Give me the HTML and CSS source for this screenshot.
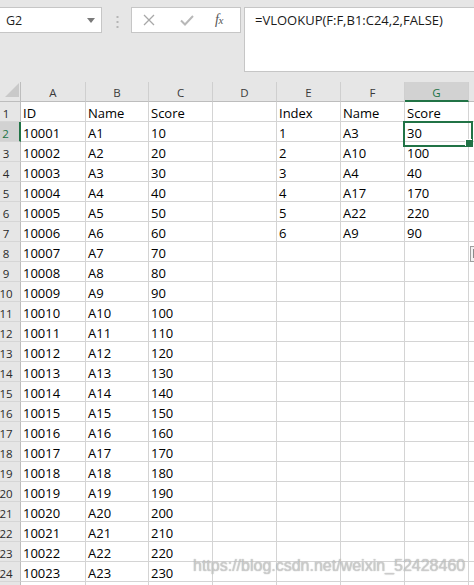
FILE: index.html
```html
<!DOCTYPE html>
<html>
<head>
<meta charset="utf-8">
<link rel="stylesheet" href="styles.css">
</head>
<body>
<div class="fbar">
  <div class="namebox"><span>G2</span><svg class="arrow" width="8" height="5" viewBox="0 0 8 5"><polygon points="0,0 8,0 4,5" fill="#7a7a7a"/></svg></div>
  <svg class="dots" width="3" height="12" viewBox="0 0 3 12"><rect x="0.5" y="0" width="2" height="2" fill="#b5b5b5"/><rect x="0.5" y="5" width="2" height="2" fill="#b5b5b5"/><rect x="0.5" y="10" width="2" height="2" fill="#b5b5b5"/></svg>
  <div class="btns">
    <svg class="btn-x" width="12" height="12" viewBox="0 0 12 12"><path d="M1 1 L11 11 M11 1 L1 11" stroke="#a8a8a8" stroke-width="1.3" fill="none"/></svg>
    <svg class="btn-ok" width="14" height="11" viewBox="0 0 14 11"><path d="M1 5.5 L5 9.5 L13 1" stroke="#b8b8b8" stroke-width="2" fill="none"/></svg>
    <span class="fx"><i>f</i><i class="x">x</i></span>
  </div>
  <div class="formula">=VLOOKUP(F:F,B1:C24,2,FALSE)</div>
</div>
<div class="sheet">
  <div class="grid">
    <div class="corner"><svg width="29" height="20" viewBox="0 0 29 20"><polygon points="13,15 27,15 27,1" fill="#c9c9c9"/></svg></div>
    <div class="ch">A</div><div class="ch">B</div><div class="ch">C</div><div class="ch">D</div><div class="ch">E</div><div class="ch">F</div><div class="ch act">G</div><div class="ch"></div>

    <div class="rh">1</div><div class="c">ID</div><div class="c">Name</div><div class="c">Score</div><div class="c"></div><div class="c">Index</div><div class="c">Name</div><div class="c">Score</div><div class="c"></div>
    <div class="rh act">2</div><div class="c">10001</div><div class="c">A1</div><div class="c">10</div><div class="c"></div><div class="c">1</div><div class="c">A3</div><div class="c sel">30</div><div class="c"></div>
    <div class="rh">3</div><div class="c">10002</div><div class="c">A2</div><div class="c">20</div><div class="c"></div><div class="c">2</div><div class="c">A10</div><div class="c">100</div><div class="c"></div>
    <div class="rh">4</div><div class="c">10003</div><div class="c">A3</div><div class="c">30</div><div class="c"></div><div class="c">3</div><div class="c">A4</div><div class="c">40</div><div class="c"></div>
    <div class="rh">5</div><div class="c">10004</div><div class="c">A4</div><div class="c">40</div><div class="c"></div><div class="c">4</div><div class="c">A17</div><div class="c">170</div><div class="c"></div>
    <div class="rh">6</div><div class="c">10005</div><div class="c">A5</div><div class="c">50</div><div class="c"></div><div class="c">5</div><div class="c">A22</div><div class="c">220</div><div class="c"></div>
    <div class="rh">7</div><div class="c">10006</div><div class="c">A6</div><div class="c">60</div><div class="c"></div><div class="c">6</div><div class="c">A9</div><div class="c">90</div><div class="c"></div>
    <div class="rh">8</div><div class="c">10007</div><div class="c">A7</div><div class="c">70</div><div class="c"></div><div class="c"></div><div class="c"></div><div class="c"></div><div class="c"></div>
    <div class="rh">9</div><div class="c">10008</div><div class="c">A8</div><div class="c">80</div><div class="c"></div><div class="c"></div><div class="c"></div><div class="c"></div><div class="c"></div>
    <div class="rh">10</div><div class="c">10009</div><div class="c">A9</div><div class="c">90</div><div class="c"></div><div class="c"></div><div class="c"></div><div class="c"></div><div class="c"></div>
    <div class="rh">11</div><div class="c">10010</div><div class="c">A10</div><div class="c">100</div><div class="c"></div><div class="c"></div><div class="c"></div><div class="c"></div><div class="c"></div>
    <div class="rh">12</div><div class="c">10011</div><div class="c">A11</div><div class="c">110</div><div class="c"></div><div class="c"></div><div class="c"></div><div class="c"></div><div class="c"></div>
    <div class="rh">13</div><div class="c">10012</div><div class="c">A12</div><div class="c">120</div><div class="c"></div><div class="c"></div><div class="c"></div><div class="c"></div><div class="c"></div>
    <div class="rh">14</div><div class="c">10013</div><div class="c">A13</div><div class="c">130</div><div class="c"></div><div class="c"></div><div class="c"></div><div class="c"></div><div class="c"></div>
    <div class="rh">15</div><div class="c">10014</div><div class="c">A14</div><div class="c">140</div><div class="c"></div><div class="c"></div><div class="c"></div><div class="c"></div><div class="c"></div>
    <div class="rh">16</div><div class="c">10015</div><div class="c">A15</div><div class="c">150</div><div class="c"></div><div class="c"></div><div class="c"></div><div class="c"></div><div class="c"></div>
    <div class="rh">17</div><div class="c">10016</div><div class="c">A16</div><div class="c">160</div><div class="c"></div><div class="c"></div><div class="c"></div><div class="c"></div><div class="c"></div>
    <div class="rh">18</div><div class="c">10017</div><div class="c">A17</div><div class="c">170</div><div class="c"></div><div class="c"></div><div class="c"></div><div class="c"></div><div class="c"></div>
    <div class="rh">19</div><div class="c">10018</div><div class="c">A18</div><div class="c">180</div><div class="c"></div><div class="c"></div><div class="c"></div><div class="c"></div><div class="c"></div>
    <div class="rh">20</div><div class="c">10019</div><div class="c">A19</div><div class="c">190</div><div class="c"></div><div class="c"></div><div class="c"></div><div class="c"></div><div class="c"></div>
    <div class="rh">21</div><div class="c">10020</div><div class="c">A20</div><div class="c">200</div><div class="c"></div><div class="c"></div><div class="c"></div><div class="c"></div><div class="c"></div>
    <div class="rh">22</div><div class="c">10021</div><div class="c">A21</div><div class="c">210</div><div class="c"></div><div class="c"></div><div class="c"></div><div class="c"></div><div class="c"></div>
    <div class="rh">23</div><div class="c">10022</div><div class="c">A22</div><div class="c">220</div><div class="c"></div><div class="c"></div><div class="c"></div><div class="c"></div><div class="c"></div>
    <div class="rh">24</div><div class="c">10023</div><div class="c">A23</div><div class="c">230</div><div class="c"></div><div class="c"></div><div class="c"></div><div class="c"></div><div class="c"></div>
    <div class="rh"></div><div class="c"></div><div class="c"></div><div class="c"></div><div class="c"></div><div class="c"></div><div class="c"></div><div class="c"></div><div class="c"></div>
  </div>
  <div class="paste-opt"><span></span></div>
  <div class="watermark">https://blog.csdn.net/weixin_52428460</div>
</div>
</body>
</html>
```
FILE: styles.css
```css
* { box-sizing: border-box; }
html, body { margin: 0; padding: 0; }
body {
  width: 474px;
  height: 585px;
  overflow: hidden;
  background: #e6e6e6;
  font-family: "Open Sans", "Liberation Sans", sans-serif;
  color: #000;
}

/* formula bar */
.fbar {
  display: flex;
  align-items: flex-start;
  height: 72px;
  padding-top: 7px;
}
.namebox {
  width: 103px;
  height: 26px;
  margin-left: -1px;
  background: #fff;
  border: 1px solid #c6c6c6;
  display: flex;
  align-items: center;
  justify-content: space-between;
  padding: 0 6px 0 6px;
  font-size: 12.5px;
  color: #1e1e1e;
}
.namebox span { line-height: 16px; padding-top: 1px; }
.dots { margin: 9px 0 0 14px; }
.btns {
  margin-left: 12px;
  width: 110px;
  height: 26px;
  background: #fff;
  border: 1px solid #c6c6c6;
  display: flex;
  align-items: center;
  padding-left: 11px;
}
.btn-x { margin-right: 25px; }
.btn-ok { margin-right: 21px; }
.fx {
  font-family: "Liberation Serif", serif;
  font-size: 14px;
  color: #555;
  line-height: 14px;
  letter-spacing: -0.5px;
}
.fx .x { font-size: 11px; }
.formula {
  flex: 1;
  margin-left: 3px;
  margin-right: -2px;
  height: 65px;
  background: #fff;
  border: 1px solid #c6c6c6;
  padding: 4px 0 0 10px;
  font-size: 13px;
  line-height: 16px;
  color: #1a1a1a;
}

/* sheet */
.sheet {
  position: relative;
  margin-top: 10px;
  height: 503px;
  overflow: hidden;
  background: #fff;
}
.grid {
  display: grid;
  grid-template-columns: 29px 65px 63px 64px 64px 64px 64px 64px 64px;
  grid-auto-rows: 20px;
  margin-left: -8px;
  width: max-content;
}
.corner {
  background: #e6e6e6;
  border-right: 1px solid #bdbdbd;
  border-bottom: 1px solid #bdbdbd;
}
.corner svg { display: block; }
.ch {
  background: #e6e6e6;
  border-right: 1px solid #cfcfcf;
  border-bottom: 1px solid #bdbdbd;
  text-align: center;
  font-size: 11.5px;
  line-height: 16px;
  padding-top: 3px;
  color: #3a3a3a;
}
.ch.act {
  background: #d2d2d2;
  color: #217346;
  border-bottom: 2px solid #217346;
}
.rh {
  background: #e6e6e6;
  border-right: 1px solid #bdbdbd;
  border-bottom: 1px solid #d6d6d6;
  text-align: center;
  font-size: 11.5px;
  line-height: 16px;
  padding-top: 4px;
  color: #2a2a2a;
}
.rh.act {
  background: #d2d2d2;
  color: #217346;
  border-right: 2px solid #217346;
}
.c {
  border-right: 1px solid #d4d4d4;
  border-bottom: 1px solid #d4d4d4;
  font-size: 13px;
  line-height: 16px;
  padding: 3px 0 0 2px;
  white-space: nowrap;
}
.c.sel { position: relative; z-index: 2; }
.c.sel::before {
  content: "";
  position: absolute;
  left: -2px;
  top: -1px;
  width: 66px;
  height: 22px;
  border: 2px solid #217346;
}
.c.sel::after {
  content: "";
  position: absolute;
  left: 60px;
  top: 17px;
  width: 6px;
  height: 6px;
  background: #217346;
  border-left: 1px solid #fff;
  border-top: 1px solid #fff;
}

/* overlays */
.paste-opt {
  position: absolute;
  left: 470px;
  top: 164px;
  width: 14px;
  height: 16px;
  border: 1px solid #9e9e9e;
  background: #f2f2f2;
  padding: 2px;
}
.paste-opt span {
  display: block;
  width: 6px;
  height: 9px;
  border: 1px solid #8a8a8a;
  background: #fff;
}
.watermark {
  position: absolute;
  left: 193px;
  top: 475px;
  font-family: "Liberation Sans", sans-serif;
  font-size: 16px;
  line-height: 18px;
  color: rgba(215, 215, 215, 0.75);
  text-shadow: 0 0 1px rgba(110, 110, 110, 0.7);
  white-space: nowrap;
}
```
